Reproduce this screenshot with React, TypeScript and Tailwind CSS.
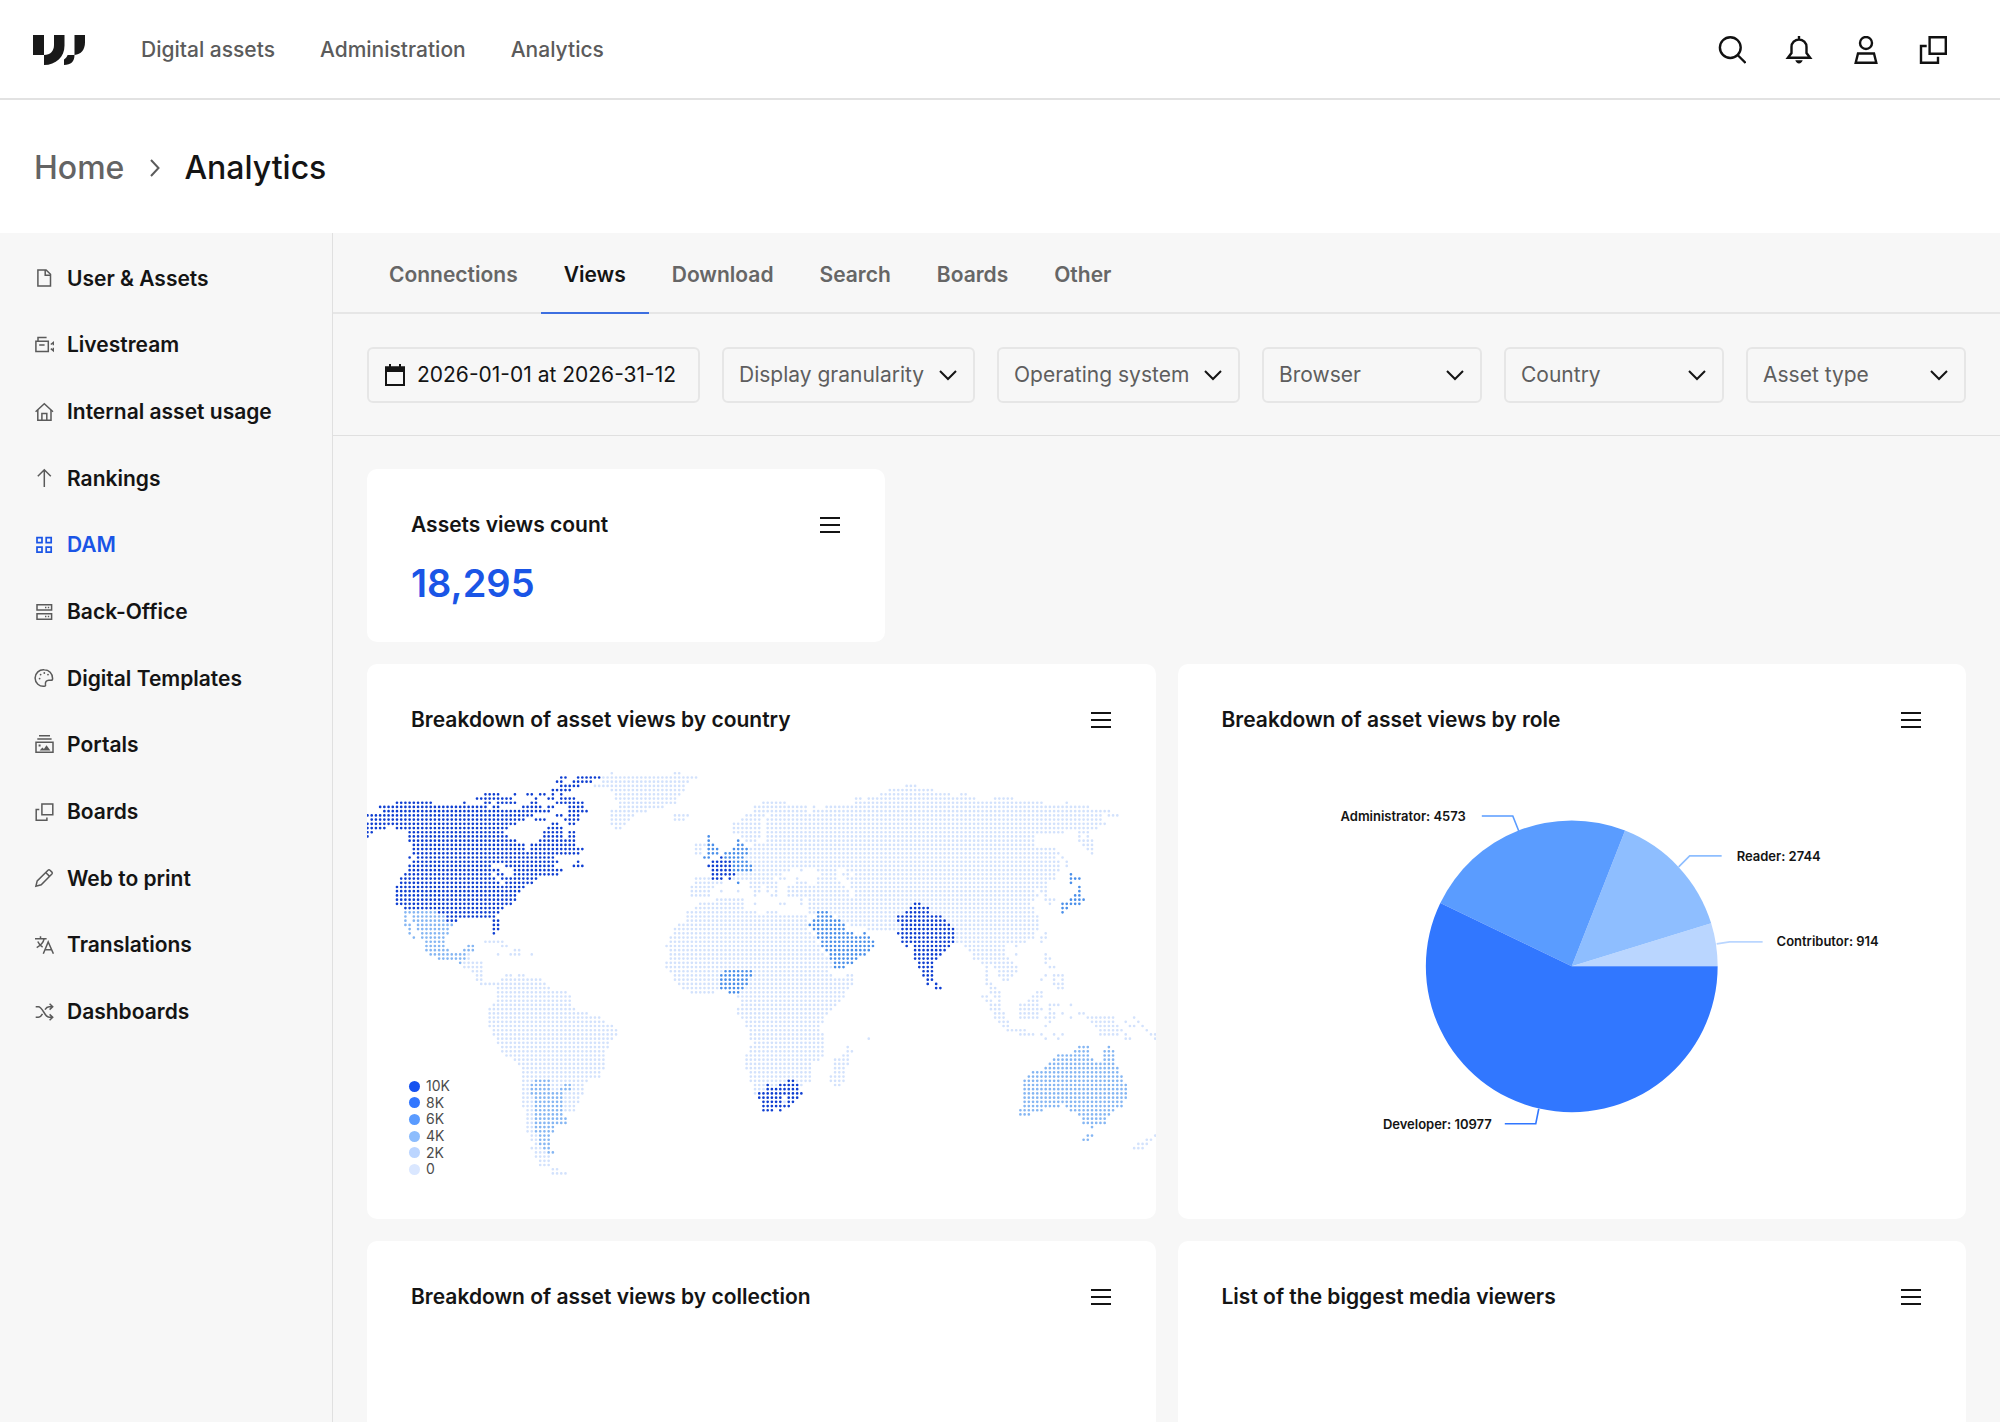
import type { ReactNode } from "react";

const TOP_NAV = ["Digital assets", "Administration", "Analytics"];
const TABS = ["Connections", "Views", "Download", "Search", "Boards", "Other"];

const FILTERS = [
  { label: "Display granularity", width: "w-[253px]" },
  { label: "Operating system", width: "w-[243px]" },
  { label: "Browser", width: "min-w-0 flex-1" },
  { label: "Country", width: "min-w-0 flex-1" },
  { label: "Asset type", width: "min-w-0 flex-1" },
];

const SIDEBAR: { label: string; icon: ReactNode }[] = [
  {
    label: "User & Assets",
    icon: (
      <>
        <path d="M3.9 1.9h8.2l4.4 4.4v11.8H3.9z" />
        <path d="M11.2 1.9v5.3h5.3" />
      </>
    ),
  },
  {
    label: "Livestream",
    icon: (
      <>
        <path d="M1.9 6.2h12.4v10.4H1.9z" />
        <path d="M4 6V2.4h8.6M5.2 10h5.4" />
        <path d="M19.4 10.2V7.4l-2.600 2.100M19.4 12.800v3l-2.600-2.100" />
      </>
    ),
  },
  {
    label: "Internal asset usage",
    icon: (
      <>
        <path d="M1.6 9.8 10.3 1.7 19 9.8" />
        <path d="M3.8 8v10.2h13.2V8" />
        <path d="M7.9 18v-6.4h4.9V18" />
      </>
    ),
  },
  { label: "Rankings", icon: <path d="M10.3 19V1.8M3.8 8.2l6.5-6.5 6.5 6.5" /> },
  {
    label: "DAM",
    icon: <path strokeWidth="1.7" d="M3 2.6h5v5H3zM12.2 2.6h5v5h-5zM3 12.2h5v5H3zM12.2 12.2h5v5h-5z" />,
  },
  {
    label: "Back-Office",
    icon: (
      <>
        <path d="M3 2.7h14.6v5.4H3zM3 11.8h14.6v5.4H3z" />
        <path d="M11 5.4h1.4M13.8 5.4h1.4M11 14.5h1.4M13.8 14.5h1.4" />
      </>
    ),
  },
  {
    label: "Digital Templates",
    icon: (
      <>
        <path d="M10.3 1.8a8.3 8.3 0 1 0 0 16.5c1 0 1.4-.7 1.2-1.6-.5-2.6.8-4.4 3.4-4.4h2.2c1.1 0 1.5-.8 1.5-1.9 0-4.8-3.7-8.6-8.3-8.6z" />
        <path strokeWidth="1.8" strokeLinecap="round" d="M5.6 10.6h.01M6.6 6.6h.01M10.3 5h.01M14 6.6h.01" />
      </>
    ),
  },
  {
    label: "Portals",
    icon: (
      <>
        <path d="M5 .8h11M3.3 4h14.3M2 7.3h17v10H2z" />
        <path fill="currentColor" stroke="none" d="M5.6 15.6l2.8-3 1.5 1.3 2.6-3.6 3.9 5.3zM4.6 9.4h2v2h-2z" />
      </>
    ),
  },
  {
    label: "Boards",
    icon: <path d="M7.9 1.9h10.9v10.9H7.9zM5.3 7.5H2.2v10.7h10.7v-2.8" />,
  },
  {
    label: "Web to print",
    icon: (
      <>
        <path d="M1.9 18.2l1.3-5.3L14 2.2q1-.9 2 0l1.9 1.9q.9 1 0 2L7.2 16.8z" />
        <path d="M11.7 4.5l3.9 3.9" />
      </>
    ),
  },
  {
    label: "Translations",
    icon: (
      <>
        <path d="M1 3.7h11.6M6.5 1.2v2.5M2.7 12.7c4-2.2 6.7-5 7.5-9M3.8 6.6c.9 2.3 2.6 4.1 4.8 5.5" />
        <path d="M9.3 18.8l4.9-11.8 5.2 11.8M11.2 14.8h6.2" />
      </>
    ),
  },
  {
    label: "Dashboards",
    icon: (
      <path d="M1.7 4.7h2.6c4.6 0 6.2 10.6 10.8 10.6h3.4M1.7 15.3h2.6c1.9 0 3.1-1.6 4.2-3.5M11 7.6c1-1.7 2.3-2.9 4.1-2.9h3.4M15.6 1.8l3.1 2.9-3.1 2.9M15.6 12.4l3.1 2.9-3.1 2.9" />
    ),
  },
];

// Each row lists the filled columns of the dotted map, grouped by shade:
// n = darkest, d = dark, m = medium, l = lightest.
const MAP_ROWS = [
  "l 58 73-74",
  "n 46-47 50-55 l 56-78",
  "n 45-46 49-53 l 56-76",
  "n 46-50 l 54-75 128-130",
  "n 44-48 l 58-75 124-134",
  "n 28-31 35 38-39 41-42 44 46 l 59-74 122-138 141-142",
  "n 26-34 40 43-44 46-49 l 59-73 116-117 119-144 149-153",
  "n 7-15 23 28-29 31-35 39-40 45-51 l 60-73 94-99 116-160 166",
  "n 3-28 30-31 37-41 43-44 48-51 l 60-70 92-104 106 109-171",
  "n 4-43 48-52 l 58-66 92-104 106-176",
  "n 0-39 45-46 48-50 l 58-63 73-76 90-94 96-174 176-178",
  "n 1-37 40-42 47-50 l 58-62 73-75 89-93 95-174",
  "n 0-35 44-45 48-49 l 58-61 87-93 95-175",
  "n 0-4 7-33 43-46 l 59-60 87-93 95-173",
  "n 0-1 10-32 42-46 48-49 l 87-93 95-165 169-171",
  "n 0 10-33 42-46 48-49 d 81 l 89-93 95-158 169 171",
  "n 10-35 41-49 d 81 88 l 90-92 95-158 169-172",
  "n 11-37 39-49 l 78-80 d 81-82 88-89 l 92-158 170-172",
  "n 11-37 39-51 l 78-79 d 81-83 87-90 l 91-163 171-172",
  "n 11-50 l 78-79 d 81-83 85-90 l 91-164 172",
  "n 10 12-44 d 80-81 n 84 d 85-89 l 90-163 165",
  "n 11-45 50 n 82-86 d 87-90 l 91-164 166",
  "n 10-29 33-44 49-51 81-86 d 87-91 l 92-164 166",
  "n 10-31 35-46 82-86 d 87-91 l 92-100 103 107-111 114-164",
  "n 9-29 31-32 35-43 44-45 82-87 l 88-98 108-111 113-114 116-163 d 167",
  "n 8-30 32-40 82-84 86 l 78-81 87-96 98-99 102 107-111 114-163 d 167-169",
  "n 8-31 33-39 l 78-84 d 88 l 91-97 102-104 107-112 115-161 d 167",
  "n 7-37 l 77-82 91-93 95-97 100-113 115-161 d 169",
  "n 7-36 l 77-81 84 88 92-93 95 97 100-114 116-158 160-161 d 169",
  "n 7-35 l 77-81 92 96-97 100-114 116-159 161 d 168-169",
  "n 7-35 l 83-89 103 105-158 161-163 d 167-170",
  "n 7-34 l 79-89 92 98-99 103 105-129 n 130-131 l 132-157 162 d 165-169",
  "n 9-32 l 78-89 105-128 n 129-133 l 134-158 d 165-166",
  "m 9-16 n 17-31 l 76-92 95-97 105-106 d 107-109 l 110-127 n 128-133 l 134-158 d 165",
  "m 9 11-18 n 19-30 l 76-104 d 107-110 l 112-125 n 126-136 l 137-159",
  "m 9 11-18 n 19-21 30-31 l 76-104 d 106-112 l 113-125 n 126-137 l 138-159",
  "m 9-10 12-20 n 30-31 l 74-104 d 105-113 l 115-126 n 127-138 l 139-159",
  "m 10 12-19 n 30-31 l 73-104 d 106-113 l 119-126 n 127-139 l 140-159",
  "m 10 13-19 n 30 l 73-105 d 107-115 118 n 126-139 l 140-158 161",
  "m 11 13-18 l 72-106 d 107-119 n 127-139 l 140-158 160-161",
  "m 14-18 l 28-32 72-106 d 108-120 n 127-139 l 140-156 160",
  "m 14-18 24-25 l 32-33 71-107 d 108-120 n 128 130-138 l 142-151 154",
  "m 14-19 23-25 l 35-36 72-107 d 109-119 n 130-137 l 143-151",
  "m 15-23 l 24 31 34-36 39 72-108 d 110-118 n 130-136 l 144-151 154 161",
  "m 17-23 l 24 72-109 d 110-116 n 130-135 l 144-152 161-162",
  "m 22 l 23-27 71-110 d 111-115 n 131-134 l 146-153 161",
  "l 23-27 71-110 d 111-113 n 131-134 l 147 149-154 162-163",
  "l 25-27 72-84 d 85-91 l 92-109 n 132-134 l 147 150-154",
  "l 26-27 33-34 36-37 73-83 d 84-91 l 92-110 114-115 n 132-134 l 147 150-153 161 163-165",
  "l 26-27 32-41 73-83 d 84-90 l 91-115 n 133-134 l 147 151-152 160 163 165",
  "l 27-42 74-83 d 84-90 l 91-115 n 133 135 l 147-148 163-165",
  "l 31-43 75-83 d 84-89 l 90-114 n 135-136 l 148-149 164-165",
  "l 31-47 77-82 d 86-88 l 89-113 148-150 159-160",
  "l 31-48 88-113 146-147 149-150 158-160",
  "l 31-48 89-112 147-148 150 157-159",
  "l 30-48 89-111 148-150 155-159 162-164 167",
  "l 29-49 88-110 148-150 155-160 162",
  "l 29-52 88-109 149-151 155-159 162-163 165 169-170",
  "l 29-55 89-108 149-151 155-159 161-163 167 171-177 182",
  "l 29-56 90-108 150-152 162 172-177 180 183",
  "l 29-58 90-107 151-152 161 173-178 181-182 184",
  "l 30-59 91-107 152-156 174-179 185",
  "l 30-59 91-108 155-158 160 163 165 174-178 180 186-187",
  "l 31-58 91-108 119 161 164 180-181 187",
  "l 31-57 92-108",
  "l 32-57 91-108 114 m 169-171 176",
  "l 32-56 91-108 114-115 m 168-171 175-177",
  "l 33-56 90-108 113-114 m 164-171 175-177",
  "l 35-56 90-107 111-114 m 163-172 175-177",
  "l 36-56 90-105 111-114 m 162-177",
  "l 37-56 90-105 111-113 m 161-178",
  "l 37-55 91-105 111-113 m 158-178",
  "l 37-55 91-105 110-113 m 157-179",
  "l 37-39 m 40-43 l 44-52 91-99 n 100-101 l 102-105 110-113 m 156-179",
  "l 37-38 m 39-43 l 44-46 m 47-48 l 49-51 92-94 n 95 l 96-97 n 98-102 l 103 111-112 m 156-180",
  "l 37-38 m 39-43 l 44-45 m 46-48 l 49-51 92-94 n 95-102 m 156-180",
  "l 37-38 m 39-46 l 47-51 92 n 93-103 m 156-180",
  "l 37-39 m 40-46 l 47-50 n 93-98 100-102 m 156-180",
  "l 37-39 m 40-46 l 47-50 n 94-98 l 99 n 100-101 m 156-179",
  "l 37-39 m 40-46 l 47-49 n 94-100 m 156-164 166-179",
  "l 38-39 m 40-46 l 47-49 n 94-96 98 m 155-160 167-177",
  "l 38-39 m 40-46 155-157 169-176",
  "l 38-39 m 40-47 170-175",
  "l 38-39 m 40-47 170-175",
  "l 38-39 m 40-44 172",
  "l 38-39 m 40-44",
  "l 39-40 m 41-43 171-172 l 187",
  "l 39-40 m 41-43 170-171 l 185-186",
  "l 40 m 41-43 l 183-185",
  "l 39-41 m 42-43 l 182-184",
  "l 40-42 m 43-44",
  "l 40-43",
  "l 41-43",
  "l 41-43",
  "l 44-45",
  "l 44-47",
];

const SHADES: Record<string, string> = {
  n: "#0f3fd2",
  d: "#4a8fea",
  m: "#85b6f3",
  l: "#d3e2fc",
};

const PITCH = 4.215;

function mapPaths() {
  const paths: Record<string, string> = { n: "", d: "", m: "", l: "" };
  MAP_ROWS.forEach((row, r) => {
    let shade = "l";
    for (const token of row.split(" ")) {
      if (token in paths) {
        shade = token;
        continue;
      }
      const [from, to = from] = token.split("-").map(Number);
      for (let c = from; c <= to; c++) {
        paths[shade] += `M${(0.5 + c * PITCH).toFixed(2)} ${(37.3 + r * PITCH).toFixed(2)}h0`;
      }
    }
  });
  return paths;
}

const MAP_PATHS = mapPaths();

const LEGEND = [
  { label: "10K", dot: "bg-[#1652f0]" },
  { label: "8K", dot: "bg-[#3277ff]" },
  { label: "6K", dot: "bg-[#5a9bff]" },
  { label: "4K", dot: "bg-[#8dbdfd]" },
  { label: "2K", dot: "bg-[#bbd5ff]" },
  { label: "0", dot: "bg-[#dae7ff]" },
];

// Slices run counter-clockwise from three o'clock.
const ROLES = [
  { name: "Contributor", value: 914, color: "#bad6ff", line: "539,208 552,206 585,206", x: 599, y: 210, anchor: "start" },
  { name: "Reader", value: 2744, color: "#8ebeff", line: "501,131 512,120 544,120", x: 559, y: 125, anchor: "start" },
  { name: "Administrator", value: 4573, color: "#5a9cff", line: "341,95 335,80 304,80", x: 288, y: 85, anchor: "end" },
  { name: "Developer", value: 10977, color: "#3177ff", line: "361,373 358,388 327,388", x: 314, y: 393, anchor: "end" },
] as const;

const CX = 394;
const CY = 230.5;
const R = 146;

function slicePath(start: number, end: number) {
  const x1 = CX + R * Math.cos(start);
  const y1 = CY - R * Math.sin(start);
  const x2 = CX + R * Math.cos(end);
  const y2 = CY - R * Math.sin(end);
  return `M${CX} ${CY}L${x1} ${y1}A${R} ${R} 0 ${end - start > Math.PI ? 1 : 0} 0 ${x2} ${y2}Z`;
}

function Logo() {
  return (
    <svg width="52" height="30" viewBox="0 0 52 30" fill="#191919" aria-hidden="true">
      <path d="M0 0h11v20H0z" />
      <path d="M21 0h10.500v10.500C31.500 22 23 30 11 30V20c6.500 0 10-4 10-10z" />
      <path d="M41.500 0H52v7.500c0 7-4 12-10.500 12.500z" />
      <path d="M41.500 20c0 6.500-3.500 10-10.500 10v-5.500c1.800-1.200 3-2.600 3.600-4.500z" />
    </svg>
  );
}

function HeaderIcon({ label, children }: { label: string; children: ReactNode }) {
  return (
    <button type="button" aria-label={label}>
      <svg width="28" height="28" viewBox="0 0 28 28" fill="none" stroke="#111" strokeWidth="2.400">
        {children}
      </svg>
    </button>
  );
}

function Header() {
  return (
    <header className="flex h-[100px] shrink-0 items-center border-b-2 border-[#e2e2e2] bg-white pt-0.5 pr-[53px] pl-[33px]">
      <a href="#" aria-label="Home">
        <Logo />
      </a>
      <nav className="ml-[56px] flex gap-[45px]">
        {TOP_NAV.map((item) => (
          <a key={item} href="#" className="text-[21px] leading-8 font-medium text-[#5b5b5b]">
            {item}
          </a>
        ))}
      </nav>
      <div className="ml-auto flex items-center gap-[39px]">
        <HeaderIcon label="Search">
          <circle cx="12.300" cy="11.600" r="10.400" />
          <path d="M19.600 19l8 8" />
        </HeaderIcon>
        <HeaderIcon label="Notifications">
          <path d="M14 0v4M6.500 11a7.500 7.500 0 0 1 15 0v6l3.600 4.700H2.900L6.500 17z" />
          <path fill="#111" stroke="none" d="M10.300 24.300h7.400c-.6 2-2 3.200-3.700 3.200s-3.100-1.200-3.700-3.200z" />
        </HeaderIcon>
        <HeaderIcon label="Account">
          <circle cx="14" cy="7" r="6" />
          <path d="M6 17.500h16l2.300 9.300H3.700z" />
        </HeaderIcon>
        <HeaderIcon label="Boards">
          <path d="M10.600 1.300h16.200v16.500H10.600zM7.700 10H2v16.800h17v-6" />
        </HeaderIcon>
      </div>
    </header>
  );
}

function Breadcrumb() {
  return (
    <nav
      aria-label="Breadcrumb"
      className="flex h-[133px] shrink-0 items-center bg-white pt-0.5 pl-[34px] text-[32px] font-medium"
    >
      <a href="#" className="text-[#646464]">
        Home
      </a>
      <svg className="mr-6 ml-[26px]" width="10" height="18" viewBox="0 0 10 18" fill="none" stroke="#5b5b5b" strokeWidth="2">
        <path d="M1 1l7.500 8L1 17" />
      </svg>
      <h1 className="text-[#141414]">Analytics</h1>
    </nav>
  );
}

function Sidebar() {
  return (
    <aside className="w-[333px] shrink-0 border-r border-[#e0e0e0] pt-3">
      <ul className="grid h-[800px] auto-rows-fr">
        {SIDEBAR.map(({ label, icon }) => (
          <li key={label} className="flex">
            <a
              href="#"
              className={`flex flex-1 items-center gap-[13px] pl-[34px] text-[21px] font-semibold ${
                label === "DAM" ? "text-[#1a55e6]" : "text-[#141414]"
              }`}
            >
              <svg
                width="20"
                height="20"
                viewBox="0 0 20 20"
                fill="none"
                stroke="currentColor"
                strokeWidth="1.500"
                aria-hidden="true"
                className={label === "DAM" ? "" : "text-[#5a5a5a]"}
              >
                {icon}
              </svg>
              {label}
            </a>
          </li>
        ))}
      </ul>
    </aside>
  );
}

function Tabs() {
  return (
    <div role="tablist" className="flex h-[81px] border-b-2 border-[#e6e6e6] px-[33px]">
      {TABS.map((tab) => (
        <button
          key={tab}
          type="button"
          role="tab"
          aria-selected={tab === "Views"}
          className={`-mb-0.5 border-b-2 px-[23px] pt-1 text-[21px] font-semibold ${
            tab === "Views" ? "border-[#3d6fe0] text-[#141414]" : "border-transparent text-[#666]"
          }`}
        >
          {tab}
        </button>
      ))}
    </div>
  );
}

function Filters() {
  return (
    <div className="flex gap-[22px] border-b border-[#e0e0e0] px-[34px] pt-[33px] pb-8">
      <button
        type="button"
        className="flex h-14 w-[333px] shrink-0 items-center gap-3 rounded-md border-2 border-[#e6e6e6] px-4 text-[21px] whitespace-nowrap text-[#141414]"
      >
        <svg width="20" height="22" viewBox="0 0 20 22" fill="none" aria-hidden="true" className="shrink-0">
          <path d="M1 3.500h18V21H1z" stroke="#141414" strokeWidth="2" />
          <path d="M0 2.500h20V8H0zM4 0h2v4H4zM14 0h2v4h-2z" fill="#141414" />
        </svg>
        2026-01-01 at 2026-31-12
      </button>
      {FILTERS.map(({ label, width }) => (
        <div key={label} className={`relative ${width}`}>
          <select
            aria-label={label}
            className="h-14 w-full appearance-none rounded-md border-2 border-[#e6e6e6] bg-transparent pl-[15px] text-[21px] text-[#5e5e5e]"
          >
            <option>{label}</option>
          </select>
          <svg
            className="pointer-events-none absolute top-[23px] right-[18px]"
            width="18"
            height="11"
            viewBox="0 0 18 11"
            fill="none"
            stroke="#141414"
            strokeWidth="2"
            aria-hidden="true"
          >
            <path d="M1 1l8 8 8-8" />
          </svg>
        </div>
      ))}
    </div>
  );
}

function Card({ title, className = "", children }: { title: string; className?: string; children?: ReactNode }) {
  return (
    <section className={`overflow-hidden rounded-[10px] bg-white pt-10 ${className}`}>
      <div className="flex h-8 items-center justify-between pr-[45px] pl-[44px]">
        <h2 className="text-[21px] font-semibold whitespace-nowrap text-[#141414]">{title}</h2>
        <button type="button" aria-label={`${title} menu`}>
          <svg width="20" height="18" viewBox="0 0 20 18" stroke="#141414" strokeWidth="2">
            <path d="M0 2h20M0 9h20M0 16h20" />
          </svg>
        </button>
      </div>
      {children}
    </section>
  );
}

function CountryMap() {
  return (
    <div className="relative">
      <svg className="block w-full" viewBox="0 0 789 483" fill="none" strokeWidth="2.700" strokeLinecap="round" role="img" aria-label="World map">
        {Object.entries(MAP_PATHS).map(([shade, d]) => (
          <path key={shade} d={d} stroke={SHADES[shade]} />
        ))}
      </svg>
      <ul className="absolute bottom-[41px] left-[42px] grid h-[100px] auto-rows-fr text-[14px] leading-4 text-[#4c4c4c]">
        {LEGEND.map(({ label, dot }) => (
          <li key={label} className="flex items-center gap-1.5">
            <span className={`size-[11px] rounded-full ${dot}`} />
            {label}
          </li>
        ))}
      </ul>
    </div>
  );
}

function RolePie() {
  const total = ROLES.reduce((sum, role) => sum + role.value, 0);
  let angle = 0;
  return (
    <svg className="block w-full" viewBox="0 0 789 483" role="img" aria-label="Asset views by role">
      {ROLES.map((role) => {
        const start = angle;
        angle += (role.value / total) * Math.PI * 2;
        return (
          <g key={role.name}>
            <path d={slicePath(start, angle)} fill={role.color} />
            <polyline points={role.line} fill="none" stroke={role.color} strokeWidth="1.600" />
            <text x={role.x} y={role.y} textAnchor={role.anchor} className="fill-[#141414] text-[13px] font-semibold">
              {role.name}: {role.value}
            </text>
          </g>
        );
      })}
    </svg>
  );
}

export default function App() {
  return (
    <div className="flex h-screen flex-col overflow-hidden bg-[#f7f7f7] font-['Inter','Liberation_Sans',sans-serif]">
      <Header />
      <Breadcrumb />
      <div className="flex min-h-0 flex-1">
        <Sidebar />
        <main className="min-w-0 flex-1 overflow-hidden">
          <Tabs />
          <Filters />
          <div className="flex flex-col gap-[22px] px-[34px] py-[33px]">
            <div className="grid grid-cols-3 gap-[22px]">
              <Card title="Assets views count" className="pb-[29px]">
                <p className="mt-3 px-[44px] text-[38px] leading-[60px] font-semibold text-[#1a55e6]">18,295</p>
              </Card>
            </div>
            <div className="grid grid-cols-2 gap-[22px]">
              <Card title="Breakdown of asset views by country">
                <CountryMap />
              </Card>
              <Card title="Breakdown of asset views by role">
                <RolePie />
              </Card>
              <Card title="Breakdown of asset views by collection" className="min-h-[555px]" />
              <Card title="List of the biggest media viewers" className="min-h-[555px]" />
            </div>
          </div>
        </main>
      </div>
    </div>
  );
}
